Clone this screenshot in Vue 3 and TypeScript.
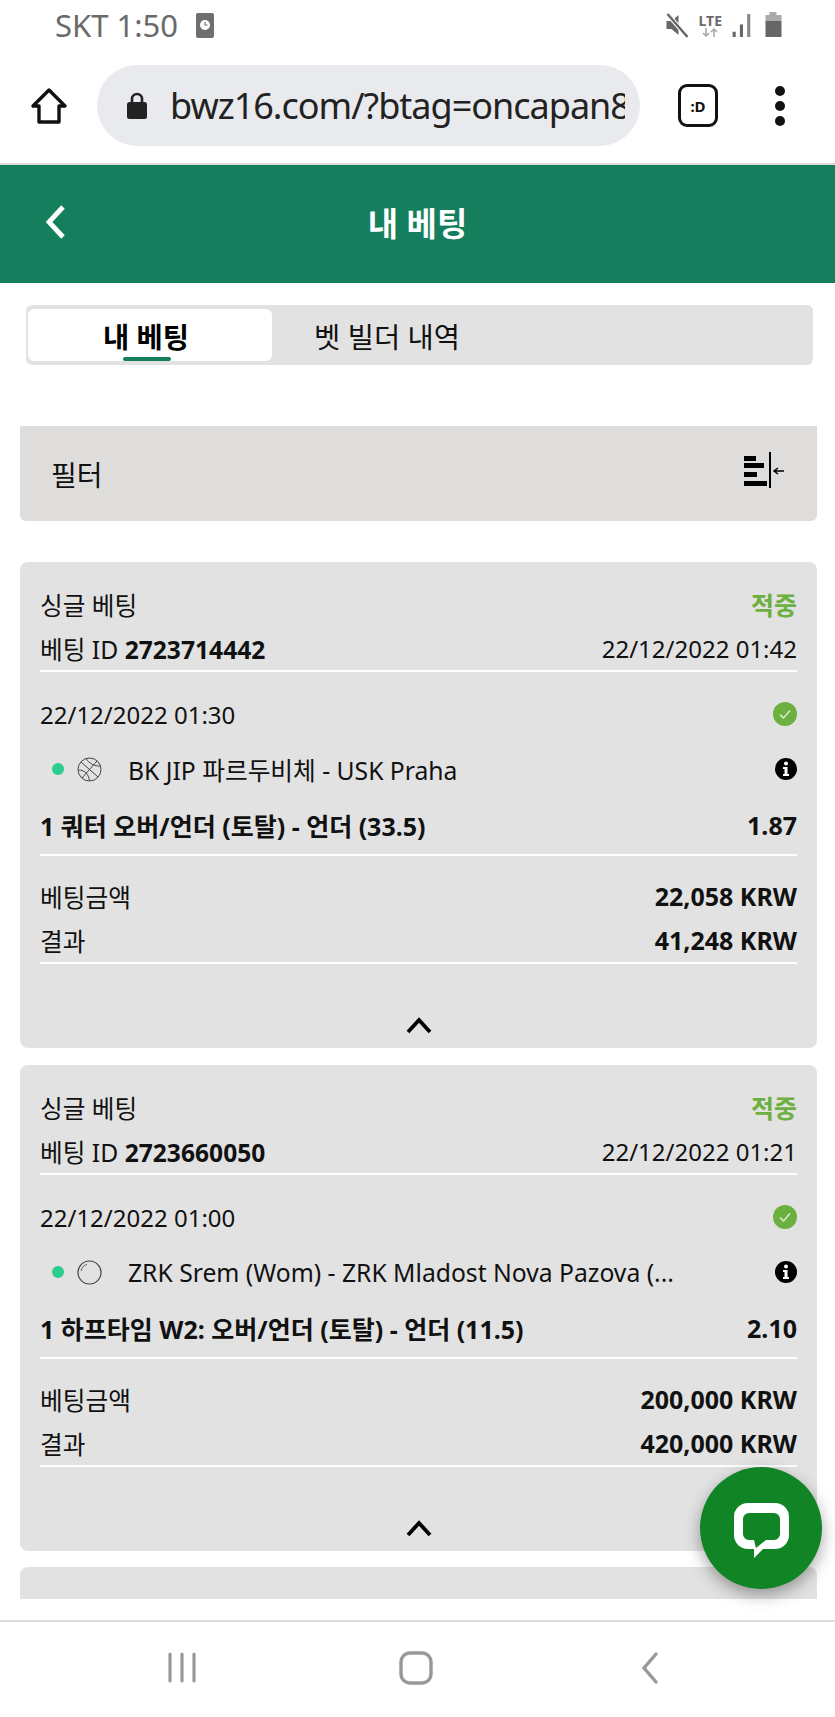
<template>
  <div class="screen">
    <div class="status">
      <div class="status__left">
        <span>SKT 1:50</span>
        <svg width="18" height="25" viewBox="0 0 18 25"><rect width="18" height="25" rx="2" fill="#6f6f6f" /><circle cx="9" cy="12" r="5" fill="#fff" /><path d="M9 9v3h2.500" stroke="#6f6f6f" stroke-width="1.200" fill="none" /></svg>
      </div>
      <div class="status__right">
        <svg width="25" height="26" viewBox="0 0 24 26"><path d="M1 9h5l7-6v20l-7-6H1z" fill="#666" /><path d="M2 2l20 23" stroke="#fff" stroke-width="4.500" /><path d="M2 2l20 23" stroke="#666" stroke-width="2.400" /></svg>
        <div class="lte">
          <span>LTE</span>
          <svg width="18" height="9" viewBox="0 0 18 9"><path d="M5 0v8M2 5l3 3 3-3M13 9V1M10 4l3-3 3 3" stroke="#aaa" stroke-width="1.600" fill="none" /></svg>
        </div>
        <svg width="24" height="25" viewBox="0 0 22 24"><rect x="1" y="18" width="3" height="5" fill="#666" /><rect x="8" y="11" width="3" height="12" fill="#666" /><rect x="15" y="1" width="3" height="22" fill="#888" /></svg>
        <svg width="19" height="26" viewBox="0 0 18 26"><rect x="5" y="0" width="7" height="4" fill="#aaa" /><rect x="1" y="3" width="16" height="6" fill="#aaa" /><rect x="1" y="9" width="16" height="16" fill="#666" /></svg>
      </div>
    </div>

    <div class="toolbar">
      <svg class="toolbar__home" width="38" height="38" viewBox="0 0 38 38"><path d="M19 3L3 19h6v16h20V19h6z" fill="none" stroke="#111" stroke-width="3.400" stroke-linejoin="round" /></svg>
      <div class="url">
        <svg width="22" height="29" viewBox="0 0 22 29"><path d="M6 12V8a5 5 0 0 1 10 0v4" fill="none" stroke="#222" stroke-width="2.600" /><rect x="1" y="11" width="20" height="17" rx="2.500" fill="#222" /></svg>
        <span class="url__text">bwz16.com/?btag=oncapan8</span>
      </div>
      <div class="face">:D</div>
      <div class="dots"><i></i><i></i><i></i></div>
    </div>

    <header class="head">
      <svg class="head__back" width="22" height="34" viewBox="0 0 22 34"><path d="M19 2L5 17l14 15" fill="none" stroke="#fff" stroke-width="4.800" /></svg>
      <h1>내 베팅</h1>
    </header>

    <main class="content">
      <div class="tabs">
        <div class="tab tab--on">내 베팅<i></i></div>
        <div class="tab tab--off">벳 빌더 내역</div>
      </div>

      <div class="filter">
        <span>필터</span>
        <svg class="filter__icon" width="40" height="36" viewBox="0 0 40 36">
          <rect y="4" width="12" height="5" />
          <rect y="11" width="20" height="5" />
          <rect y="20" width="13" height="5" />
          <rect y="29" width="23" height="5" />
          <rect x="25" width="2" height="36" />
          <path d="M40 19h-9M34 16l-4 3 4 3" stroke="#000" stroke-width="1.500" fill="none" />
        </svg>
      </div>

      <section v-for="bet in bets" :key="bet.id" class="card">
        <div class="row row--type">
          <span>싱글 베팅</span>
          <b class="won">적중</b>
        </div>
        <div class="row row--id">
          <span>베팅 ID <b class="row__id">{{ bet.id }}</b></span>
          <span class="time">{{ bet.placed }}</span>
        </div>
        <div class="row row--date">
          <span class="time">{{ bet.start }}</span>
          <svg width="24" height="24" viewBox="0 0 24 24"><circle cx="12" cy="12" r="12" fill="#6cb040" /><path d="M7 12.500l3.500 3.500L17 8.500" fill="none" stroke="#e4f0dc" stroke-width="1.300" /></svg>
        </div>
        <div class="row row--match">
          <div class="match">
            <i class="live"></i>
            <svg v-if="bet.sport === 'basket'" width="25" height="25" viewBox="0 0 25 25" fill="none" stroke="#444" stroke-width="1"><circle cx="12.500" cy="12.500" r="11.500" /><path d="M4 5l17 15M20 4L5 21M9 1.500c3 5 9 8 14.500 7.500M1.500 13c6 0 10 4 11 10.500" /></svg>
            <svg v-else width="25" height="25" viewBox="0 0 25 25" fill="none" stroke="#444" stroke-width="1.200"><circle cx="12.500" cy="12.500" r="11.500" /><path d="M4 11c.5-3 3-6 6-6.500" stroke-width="0.800" /></svg>
            <span class="match__name">{{ bet.match }}</span>
          </div>
          <svg width="22" height="22" viewBox="0 0 22 22"><circle cx="11" cy="11" r="11" fill="#000" /><circle cx="11" cy="5.500" r="2" fill="#fff" /><path d="M8 9h4.500v7H14v2H8v-2h1.500v-5H8z" fill="#fff" /></svg>
        </div>
        <div class="row row--market">
          <b>{{ bet.market }}</b>
          <b>{{ bet.odds }}</b>
        </div>
        <div class="row row--stake">
          <span>베팅금액</span>
          <b>{{ bet.stake }} KRW</b>
        </div>
        <div class="row row--result">
          <span>결과</span>
          <b>{{ bet.result }} KRW</b>
        </div>
        <div class="fold">
          <svg width="26" height="17" viewBox="0 0 26 17"><path d="M2 15L13 3l11 12" fill="none" stroke="#000" stroke-width="3.800" /></svg>
        </div>
      </section>

      <section class="card card--cut"></section>
    </main>

    <nav class="nav">
      <svg width="28" height="31" viewBox="0 0 28 31"><path d="M2 2v27M14 2v27M26 2v27" stroke="#999" stroke-width="3.200" stroke-linecap="round" /></svg>
      <svg width="34" height="34" viewBox="0 0 34 34"><rect x="2" y="2" width="30" height="30" rx="9" fill="none" stroke="#999" stroke-width="3.400" /></svg>
      <svg width="20" height="32" viewBox="0 0 20 32"><path d="M16 2L4 16l12 14" fill="none" stroke="#999" stroke-width="3.400" stroke-linecap="round" /></svg>
    </nav>

    <button class="chat">
      <svg width="55" height="55" viewBox="0 0 55 55"><path fill-rule="evenodd" fill="#fff" d="M14 0H41a14 14 0 0 1 14 14V32a14 14 0 0 1-14 14H29L20 55V46H14A14 14 0 0 1 0 32V14A14 14 0 0 1 14 0ZM15 10a6 6 0 0 0-6 6V31a6 6 0 0 0 6 6H20L22 45L32 37H40a6 6 0 0 0 6-6V16a6 6 0 0 0-6-6Z" /></svg>
    </button>
  </div>
</template>

<script setup lang="ts">
interface Bet {
  id: string
  placed: string
  start: string
  sport: 'basket' | 'ball'
  match: string
  market: string
  odds: string
  stake: string
  result: string
}

const bets: Bet[] = [
  {
    id: '2723714442',
    placed: '22/12/2022 01:42',
    start: '22/12/2022 01:30',
    sport: 'basket',
    match: 'BK JIP 파르두비체 - USK Praha',
    market: '1 쿼터 오버/언더 (토탈) - 언더 (33.5)',
    odds: '1.87',
    stake: '22,058',
    result: '41,248'
  },
  {
    id: '2723660050',
    placed: '22/12/2022 01:21',
    start: '22/12/2022 01:00',
    sport: 'ball',
    match: 'ZRK Srem (Wom) - ZRK Mladost Nova Pazova (...',
    market: '1 하프타임 W2: 오버/언더 (토탈) - 언더 (11.5)',
    odds: '2.10',
    stake: '200,000',
    result: '420,000'
  }
]
</script>

<style>
html,
body {
  margin: 0;
  background: #fff;
}
</style>

<style scoped>
.screen {
  position: relative;
  width: 835px;
  height: 1717px;
  overflow: hidden;
  display: flex;
  flex-direction: column;
  background: #fff;
  color: #111;
  font-family: 'Noto Sans', 'Noto Sans CJK KR', sans-serif;
  font-size: 24.7px;
}

b {
  font-weight: 700;
  font-size: 25px;
}

.status {
  height: 50px;
  flex-shrink: 0;
  display: flex;
  align-items: center;
  justify-content: space-between;
  padding: 0 55px;
  color: #6a6a6a;
  font-size: 31px;
}

.status__left {
  display: flex;
  align-items: center;
  gap: 18px;
}

.status__right {
  display: flex;
  align-items: center;
  gap: 9px;
  margin-right: -3px;
}

.lte {
  display: flex;
  flex-direction: column;
  align-items: center;
  font-size: 14px;
  line-height: 14px;
  font-weight: 700;
}

.lte svg {
  display: block;
}

.toolbar {
  height: 115px;
  flex-shrink: 0;
  display: flex;
  align-items: center;
  padding: 0 30px 2px;
  border-bottom: 2px solid #dcdcdc;
  box-sizing: border-box;
}

.toolbar__home {
  flex-shrink: 0;
}

.url {
  width: 543px;
  height: 81px;
  margin-left: 29px;
  border-radius: 41px;
  background: #e9eaee;
  display: flex;
  align-items: center;
  gap: 22px;
  padding: 0 15px 0 29px;
  box-sizing: border-box;
  flex-shrink: 0;
}

.url svg {
  flex-shrink: 0;
}

.url__text {
  font-size: 36px;
  white-space: nowrap;
  overflow: hidden;
  color: #222;
  letter-spacing: -1px;
}

.face {
  width: 34px;
  height: 37px;
  margin-left: 38px;
  border: 3.5px solid #111;
  border-radius: 9px;
  font-size: 15px;
  font-weight: 700;
  display: flex;
  align-items: center;
  justify-content: center;
  flex-shrink: 0;
}

.dots {
  margin-left: 57px;
  display: flex;
  flex-direction: column;
  gap: 5px;
}

.dots i {
  width: 10px;
  height: 10px;
  border-radius: 50%;
  background: #111;
}

.head {
  height: 118px;
  flex-shrink: 0;
  background: #157f5d;
  color: #fff;
  display: flex;
  align-items: center;
  justify-content: center;
  position: relative;
}

.head h1 {
  margin: 0;
  font-size: 33px;
  font-weight: 700;
  transform: translateY(-2px);
}

.head__back {
  position: absolute;
  left: 44px;
  top: 40px;
}

.content {
  flex: 1;
  min-height: 0;
  overflow: hidden;
  padding: 22px 18px 0 20px;
}

.tabs {
  margin: 0 4px 0 6px;
  height: 60px;
  background: #e2e2e2;
  border-radius: 6px;
  padding: 4px 2px;
  box-sizing: border-box;
  display: flex;
  align-items: center;
  font-size: 28.5px;
}

.tab {
  width: 244px;
  height: 52px;
  display: flex;
  align-items: center;
  justify-content: center;
  position: relative;
  border-radius: 6px;
  box-sizing: border-box;
}

.tab--on {
  background: #fff;
  font-weight: 700;
  color: #000;
  padding-right: 8px;
}

.tab--off {
  padding-right: 14px;
}

.tab--on i {
  position: absolute;
  left: 95px;
  bottom: 0;
  width: 48px;
  height: 4px;
  background: #157f5d;
  border-radius: 2px;
}

.filter {
  margin-top: 61px;
  height: 95px;
  background: #dedddb;
  border-radius: 0 0 6px 6px;
  display: flex;
  align-items: center;
  justify-content: space-between;
  padding: 0 33px 0 31px;
  font-size: 28px;
}

.filter__icon {
  margin-bottom: 7px;
}

.card {
  margin-top: 41px;
  height: 486px;
  background: #e2e2e2;
  border-radius: 8px;
  padding: 0 20px;
  box-sizing: border-box;
  display: flex;
  flex-direction: column;
}

.card + .card {
  margin-top: 17px;
}

.card--cut {
  border-radius: 8px 8px 0 0;
  height: 32px;
  margin-top: 16px !important;
}

.row {
  display: flex;
  align-items: center;
  justify-content: space-between;
  white-space: nowrap;
}

.row__id {
  font-size: 24.6px;
}

.time {
  font-size: 24px;
}

.row--type {
  margin-top: 26px;
  height: 32px;
}

.won {
  color: #6cb040;
}

.row--id {
  margin-top: 11px;
  height: 34px;
  padding-bottom: 5px;
  box-sizing: content-box;
  border-bottom: 2px solid #fff;
}

.row--date {
  margin-top: 25px;
  height: 34px;
}

.row--match {
  margin-top: 21px;
  height: 34px;
}

.match {
  display: flex;
  align-items: center;
}

.live {
  width: 12px;
  height: 12px;
  border-radius: 50%;
  background: #2dcc8f;
  margin: 0 13px 0 12px;
}

.match__name {
  margin-left: 26px;
}

.row--market {
  margin-top: 22px;
  height: 34px;
  padding-bottom: 12px;
  border-bottom: 2px solid #fff;
}

.row--stake {
  margin-top: 23px;
  height: 34px;
}

.row--result {
  margin-top: 10px;
  height: 34px;
  padding-bottom: 5px;
  border-bottom: 2px solid #fff;
}

.fold {
  margin-top: 53px;
  display: flex;
  justify-content: center;
}

.nav {
  height: 97px;
  flex-shrink: 0;
  border-top: 2px solid #dedede;
  display: grid;
  grid-template-columns: repeat(3, 234px);
  justify-content: center;
  justify-items: center;
  align-items: center;
  padding: 0 3px 4px 0;
  box-sizing: border-box;
  background: #fff;
}

.chat {
  position: absolute;
  left: 700px;
  top: 1467px;
  width: 122px;
  height: 122px;
  border: 0;
  border-radius: 50%;
  background: #118526;
  box-shadow: 0 6px 16px rgba(0, 0, 0, 0.35);
  display: flex;
  align-items: center;
  justify-content: center;
  padding: 5px 0 0;
}
</style>
